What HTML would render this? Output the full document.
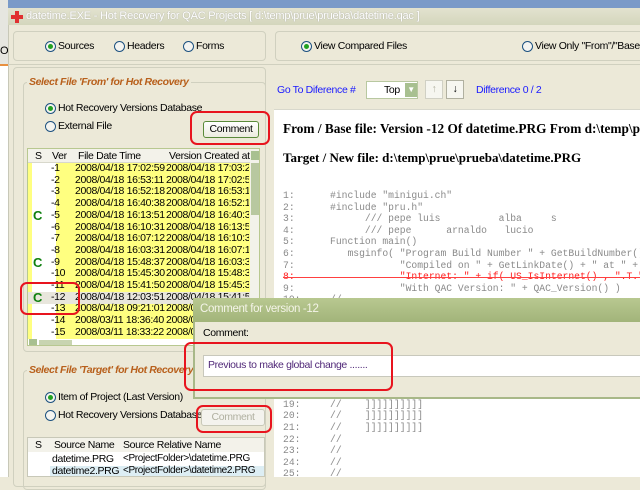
<!DOCTYPE html>
<html><head><style>
*{margin:0;padding:0;box-sizing:border-box}
body{width:640px;height:477px;overflow:hidden;position:relative;background:#ece9d8;font-family:"Liberation Sans",sans-serif;font-size:10.5px;letter-spacing:-0.35px;color:#000}
.a{position:absolute;white-space:nowrap}
.grp{position:absolute;border:1px solid #d0d0bf;border-radius:4px}
.rad{position:absolute;width:11px;height:11px;border:1px solid #1c5180;border-radius:50%;background:#f4f4f0}
.rad.on::after{content:"";position:absolute;left:2px;top:2px;width:5px;height:5px;border-radius:50%;background:#21a121}
.red{position:absolute;border:2px solid #e8141e;border-radius:7px}
.gt{position:absolute;font-style:italic;font-weight:bold;color:#b8601c;background:#ece9d8;padding:0 2px;font-size:10.5px;letter-spacing:-0.4px}
.code{position:absolute;font-family:"Liberation Mono",monospace;font-size:9.7px;letter-spacing:0;color:#8a8a8a;white-space:pre}
.row{position:absolute;left:0;height:11.7px;width:233px}
.row span{position:absolute;top:0;line-height:11.7px}
</style></head><body>
<div class="a" style="left:0;top:0;width:640px;height:8px;background:#7a9ac8"></div>
<div class="a" style="left:0;top:0;width:8px;height:477px;background:#e6e6e0"></div>
<div class="a" style="left:0;top:64px;width:8px;height:413px;background:#fff;border-top:2px solid #e89040"></div>
<div class="a" style="left:0;top:45px;font-size:11px">O</div>
<div class="a" style="left:8px;top:8px;width:632px;height:17px;background:linear-gradient(#e2e2cf,#d4d6bc)"></div>
<div class="a" style="left:11px;top:11px;width:12px;height:12px"><div class="a" style="left:4px;top:0;width:4px;height:12px;background:#e03030"></div><div class="a" style="left:0;top:4px;width:12px;height:4px;background:#e03030"></div></div>
<div class="a" style="left:26px;top:10px;font-size:11px;letter-spacing:-0.2px;color:#fff;text-shadow:0 0 1px #999">datetime.EXE - Hot Recovery for QAC Projects [ d:\temp\prue\prueba\datetime.qac ]</div>
<div class="a" style="left:8px;top:25px;width:632px;height:452px;background:#ece9d8;border-left:1px solid #c8c8b8"></div>
<div class="grp" style="left:13px;top:31px;width:253px;height:30px"></div>
<div class="rad on" style="left:45px;top:41px"></div><div class="a" style="left:58px;top:40px">Sources</div>
<div class="rad" style="left:114px;top:41px"></div><div class="a" style="left:127px;top:40px">Headers</div>
<div class="rad" style="left:183px;top:41px"></div><div class="a" style="left:196px;top:40px">Forms</div>
<div class="grp" style="left:275px;top:31px;width:365px;height:30px;border-right:none;border-radius:4px 0 0 4px"></div>
<div class="rad on" style="left:301px;top:41px"></div><div class="a" style="left:314px;top:40px">View Compared Files</div>
<div class="rad" style="left:522px;top:41px"></div><div class="a" style="left:535px;top:40px">View Only "From"/"Base"</div>
<div class="a" style="left:8px;top:64px;width:632px;height:1px;background:#d0d0bf"></div>
<div class="grp" style="left:13px;top:67px;width:253px;height:420px"></div>
<div class="grp" style="left:23px;top:82px;width:243px;height:270px"></div>
<div class="gt" style="left:27px;top:76px">Select File 'From' for Hot Recovery</div>
<div class="rad on" style="left:45px;top:103px"></div><div class="a" style="left:58px;top:102px">Hot Recovery Versions Database</div>
<div class="rad" style="left:45px;top:121px"></div><div class="a" style="left:58px;top:120px">External File</div>
<div class="a" style="left:203px;top:121px;width:56px;height:17px;border:1px solid #5a8a3a;border-radius:3px;background:linear-gradient(#fff,#ecebe0);text-align:center;line-height:15px">Comment</div>
<div class="red" style="left:190px;top:111px;width:80px;height:34px"></div>
<div class="a" style="left:27px;top:148px;width:233px;height:198px;border:1px solid #b8c890;background:#fff;overflow:hidden">
 <div class="a" style="left:0;top:0;width:233px;height:14px;background:#f3f2ea;border-bottom:1px solid #d8d8cc"></div>
 <div class="a" style="left:7px;top:1px">S</div><div class="a" style="left:24px;top:1px">Ver</div><div class="a" style="left:50px;top:1px">File Date Time</div><div class="a" style="left:141px;top:1px">Version Created at</div>
 <div class="a" style="left:222px;top:0;width:11px;height:198px;background:#f2f2ea"></div>
 <div class="a" style="left:223px;top:2px;width:9px;height:9px;background:#a8c090"></div>
 <div class="a" style="left:223px;top:14px;width:9px;height:52px;background:#b8c8a0"></div>
 <div class="a" style="left:28px;top:14px;width:194px;height:176px;background:#ffff80"></div>
 <div class="a" style="left:0;top:14px;width:4px;height:176px;background:#ffff80"></div>
 <div class="a" style="left:1px;top:190px;width:8px;height:8px;background:#a8c090"></div>
 <div class="a" style="left:11px;top:191px;width:33px;height:6px;background:#c8d4b0"></div>
 <div class="a" style="left:0;top:143px;width:222px;height:12px;background:#e8e6dc"></div>
</div>
<div id="g1" class="a" style="left:27px;top:163px;width:222px;height:176px;overflow:hidden;color:#000"></div>
<div class="red" style="left:20px;top:282px;width:60px;height:33px"></div>
<div class="grp" style="left:23px;top:370px;width:243px;height:120px"></div>
<div class="gt" style="left:27px;top:364px">Select File 'Target' for Hot Recovery</div>
<div class="rad on" style="left:45px;top:392px"></div><div class="a" style="left:58px;top:391px">Item of Project (Last Version)</div>
<div class="rad" style="left:45px;top:410px"></div><div class="a" style="left:58px;top:409px">Hot Recovery Versions Database</div>
<div class="a" style="left:201px;top:409px;width:64px;height:17px;border:1px solid #c8c8b8;border-radius:3px;background:#f4f3ee;color:#b0b0a0;text-align:center;line-height:15px">Comment</div>
<div class="red" style="left:196px;top:405px;width:76px;height:28px"></div>
<div class="a" style="left:27px;top:437px;width:238px;height:40px;border:1px solid #c8c8b8;background:#fff;overflow:hidden">
 <div class="a" style="left:0;top:0;width:238px;height:14px;background:#f3f2ea"></div>
 <div class="a" style="left:7px;top:1px">S</div><div class="a" style="left:26px;top:1px">Source Name</div><div class="a" style="left:95px;top:1px">Source Relative Name</div>
 <div class="a" style="left:0;top:28px;width:238px;height:12px;background:#ddeef4"></div>
 <div class="a" style="left:0;top:14px;width:22px;height:26px;background:#fff"></div>
 <div class="a" style="left:24px;top:15px">datetime.PRG</div><div class="a" style="left:95px;top:15px;font-size:10px">&lt;ProjectFolder&gt;\datetime.PRG</div>
 <div class="a" style="left:24px;top:27px">datetime2.PRG</div><div class="a" style="left:95px;top:27px;font-size:10px">&lt;ProjectFolder&gt;\datetime2.PRG</div>
</div>
<div class="a" style="left:277px;top:84px;color:#1a1aff">Go To Diference #</div>
<div class="a" style="left:366px;top:81px;width:52px;height:18px;border:1px solid #b8c8a0;background:#fff"><div class="a" style="left:17px;top:2px">Top</div><div class="a" style="left:38px;top:1px;width:12px;height:14px;background:#a8c090;color:#fff;font-size:8px;text-align:center;line-height:14px">&#9660;</div></div>
<div class="a" style="left:425px;top:80px;width:18px;height:19px;border:1px solid #d0d0c4;background:#f6f6f0;color:#b0b0a0;text-align:center;line-height:17px">&#8593;</div>
<div class="a" style="left:446px;top:80px;width:18px;height:19px;border:1px solid #b0b0a0;background:#f6f6f0;text-align:center;line-height:17px">&#8595;</div>
<div class="a" style="left:476px;top:84px;color:#1a1aff">Difference 0 / 2</div>
<div class="a" style="left:274px;top:109px;width:366px;height:368px;background:#fff;border-top:1px solid #d8d8cc;overflow:hidden">
<div class="a" style="left:9px;top:11px;font-family:'Liberation Serif',serif;font-weight:bold;font-size:13.3px;letter-spacing:0">From / Base file: Version -12 Of datetime.PRG From d:\temp\prue\prueba\datetime.PRG</div>
<div class="a" style="left:9px;top:40px;font-family:'Liberation Serif',serif;font-weight:bold;font-size:13px;letter-spacing:0">Target / New file: d:\temp\prue\prueba\datetime.PRG</div>
<div id="code" class="a" style="left:-274px;top:-109px;width:640px;height:477px"></div>
</div>
<div class="a" style="left:283px;top:277px;width:357px;height:1px;background:#ff4040"></div>
<div class="a" style="left:193px;top:298px;width:447px;height:101px;background:#ece9d8;border:2px solid #a8b888;border-right:none"></div>
<div class="a" style="left:193px;top:298px;width:447px;height:24px;background:linear-gradient(#b8c890,#a2b47a)"></div>
<div class="a" style="left:200px;top:303px;font-size:11.5px;color:#f4f4e8">Comment for version -12</div>
<div class="a" style="left:203px;top:327px">Comment:</div>
<div class="a" style="left:203px;top:355px;width:437px;height:22px;background:#fff;border:1px solid #c8c8bc;border-right:none"></div>
<div class="a" style="left:208px;top:359px;color:#502878">Previous to make global change .......</div>
<div class="red" style="left:184px;top:342px;width:209px;height:49px"></div>
<script>
var d=[["-1","2008/04/18 17:02:59","2008/04/18 17:03:26",""],["-2","2008/04/18 16:53:11","2008/04/18 17:02:59",""],["-3","2008/04/18 16:52:18","2008/04/18 16:53:11",""],["-4","2008/04/18 16:40:38","2008/04/18 16:52:18",""],["-5","2008/04/18 16:13:51","2008/04/18 16:40:38","C"],["-6","2008/04/18 16:10:31","2008/04/18 16:13:52",""],["-7","2008/04/18 16:07:12","2008/04/18 16:10:32",""],["-8","2008/04/18 16:03:31","2008/04/18 16:07:12",""],["-9","2008/04/18 15:48:37","2008/04/18 16:03:31","C"],["-10","2008/04/18 15:45:30","2008/04/18 15:48:38",""],["-11","2008/04/18 15:41:50","2008/04/18 15:45:30",""],["-12","2008/04/18 12:03:51","2008/04/18 15:41:50","C"],["-13","2008/04/18 09:21:01","2008/04/18 12:03:51",""],["-14","2008/03/11 18:36:40","2008/04/18 09:21:01",""],["-15","2008/03/11 18:33:22","2008/03/11 18:36:40",""]];
var h="";d.forEach(function(r,i){h+='<div class="row" style="top:'+(i*11.7)+'px"><span style="left:6px;color:#108010;font-weight:bold;font-size:13px">'+r[3]+'</span><span style="left:24px">'+r[0]+'</span><span style="left:48px">'+r[1]+'</span><span style="left:139px">'+r[2]+'</span></div>';});
document.getElementById("g1").innerHTML=h;
var c=[["1:",'#include "minigui.ch"',0],["2:",'#include "pru.h"',0],["3:",'      /// pepe luis          alba     s',0],["4:",'      /// pepe      arnaldo   lucio',0],["5:",'Function main()',0],["6:",'   msginfo( "Program Build Number " + GetBuildNumber() + ;',0],["7:",'            "Compiled on " + GetLinkDate() + " at " + ;',0],["8:",'            "Internet: " + if( US_IsInternet() , ".T.", ".F." ) + ;',1],["9:",'            "With QAC Version: " + QAC_Version() )',0],["10:",'//',0]];
for(var n=19;n<=25;n++)c.push([n+":",n<22?'//    ]]]]]]]]]]':'//',0,n]);
h="";c.forEach(function(r,i){var ln=r[3]||i+1;var y=189+(ln-1)*11.6;h+='<div class="code" style="left:283px;top:'+y+'px;'+(r[2]?'color:#ff2020':'')+'">'+r[0]+'</div><div class="code" style="left:330px;top:'+y+'px;'+(r[2]?'color:#ff2020':'')+'">'+r[1]+'</div>';});
document.getElementById("code").innerHTML=h;
</script>
</body></html>
